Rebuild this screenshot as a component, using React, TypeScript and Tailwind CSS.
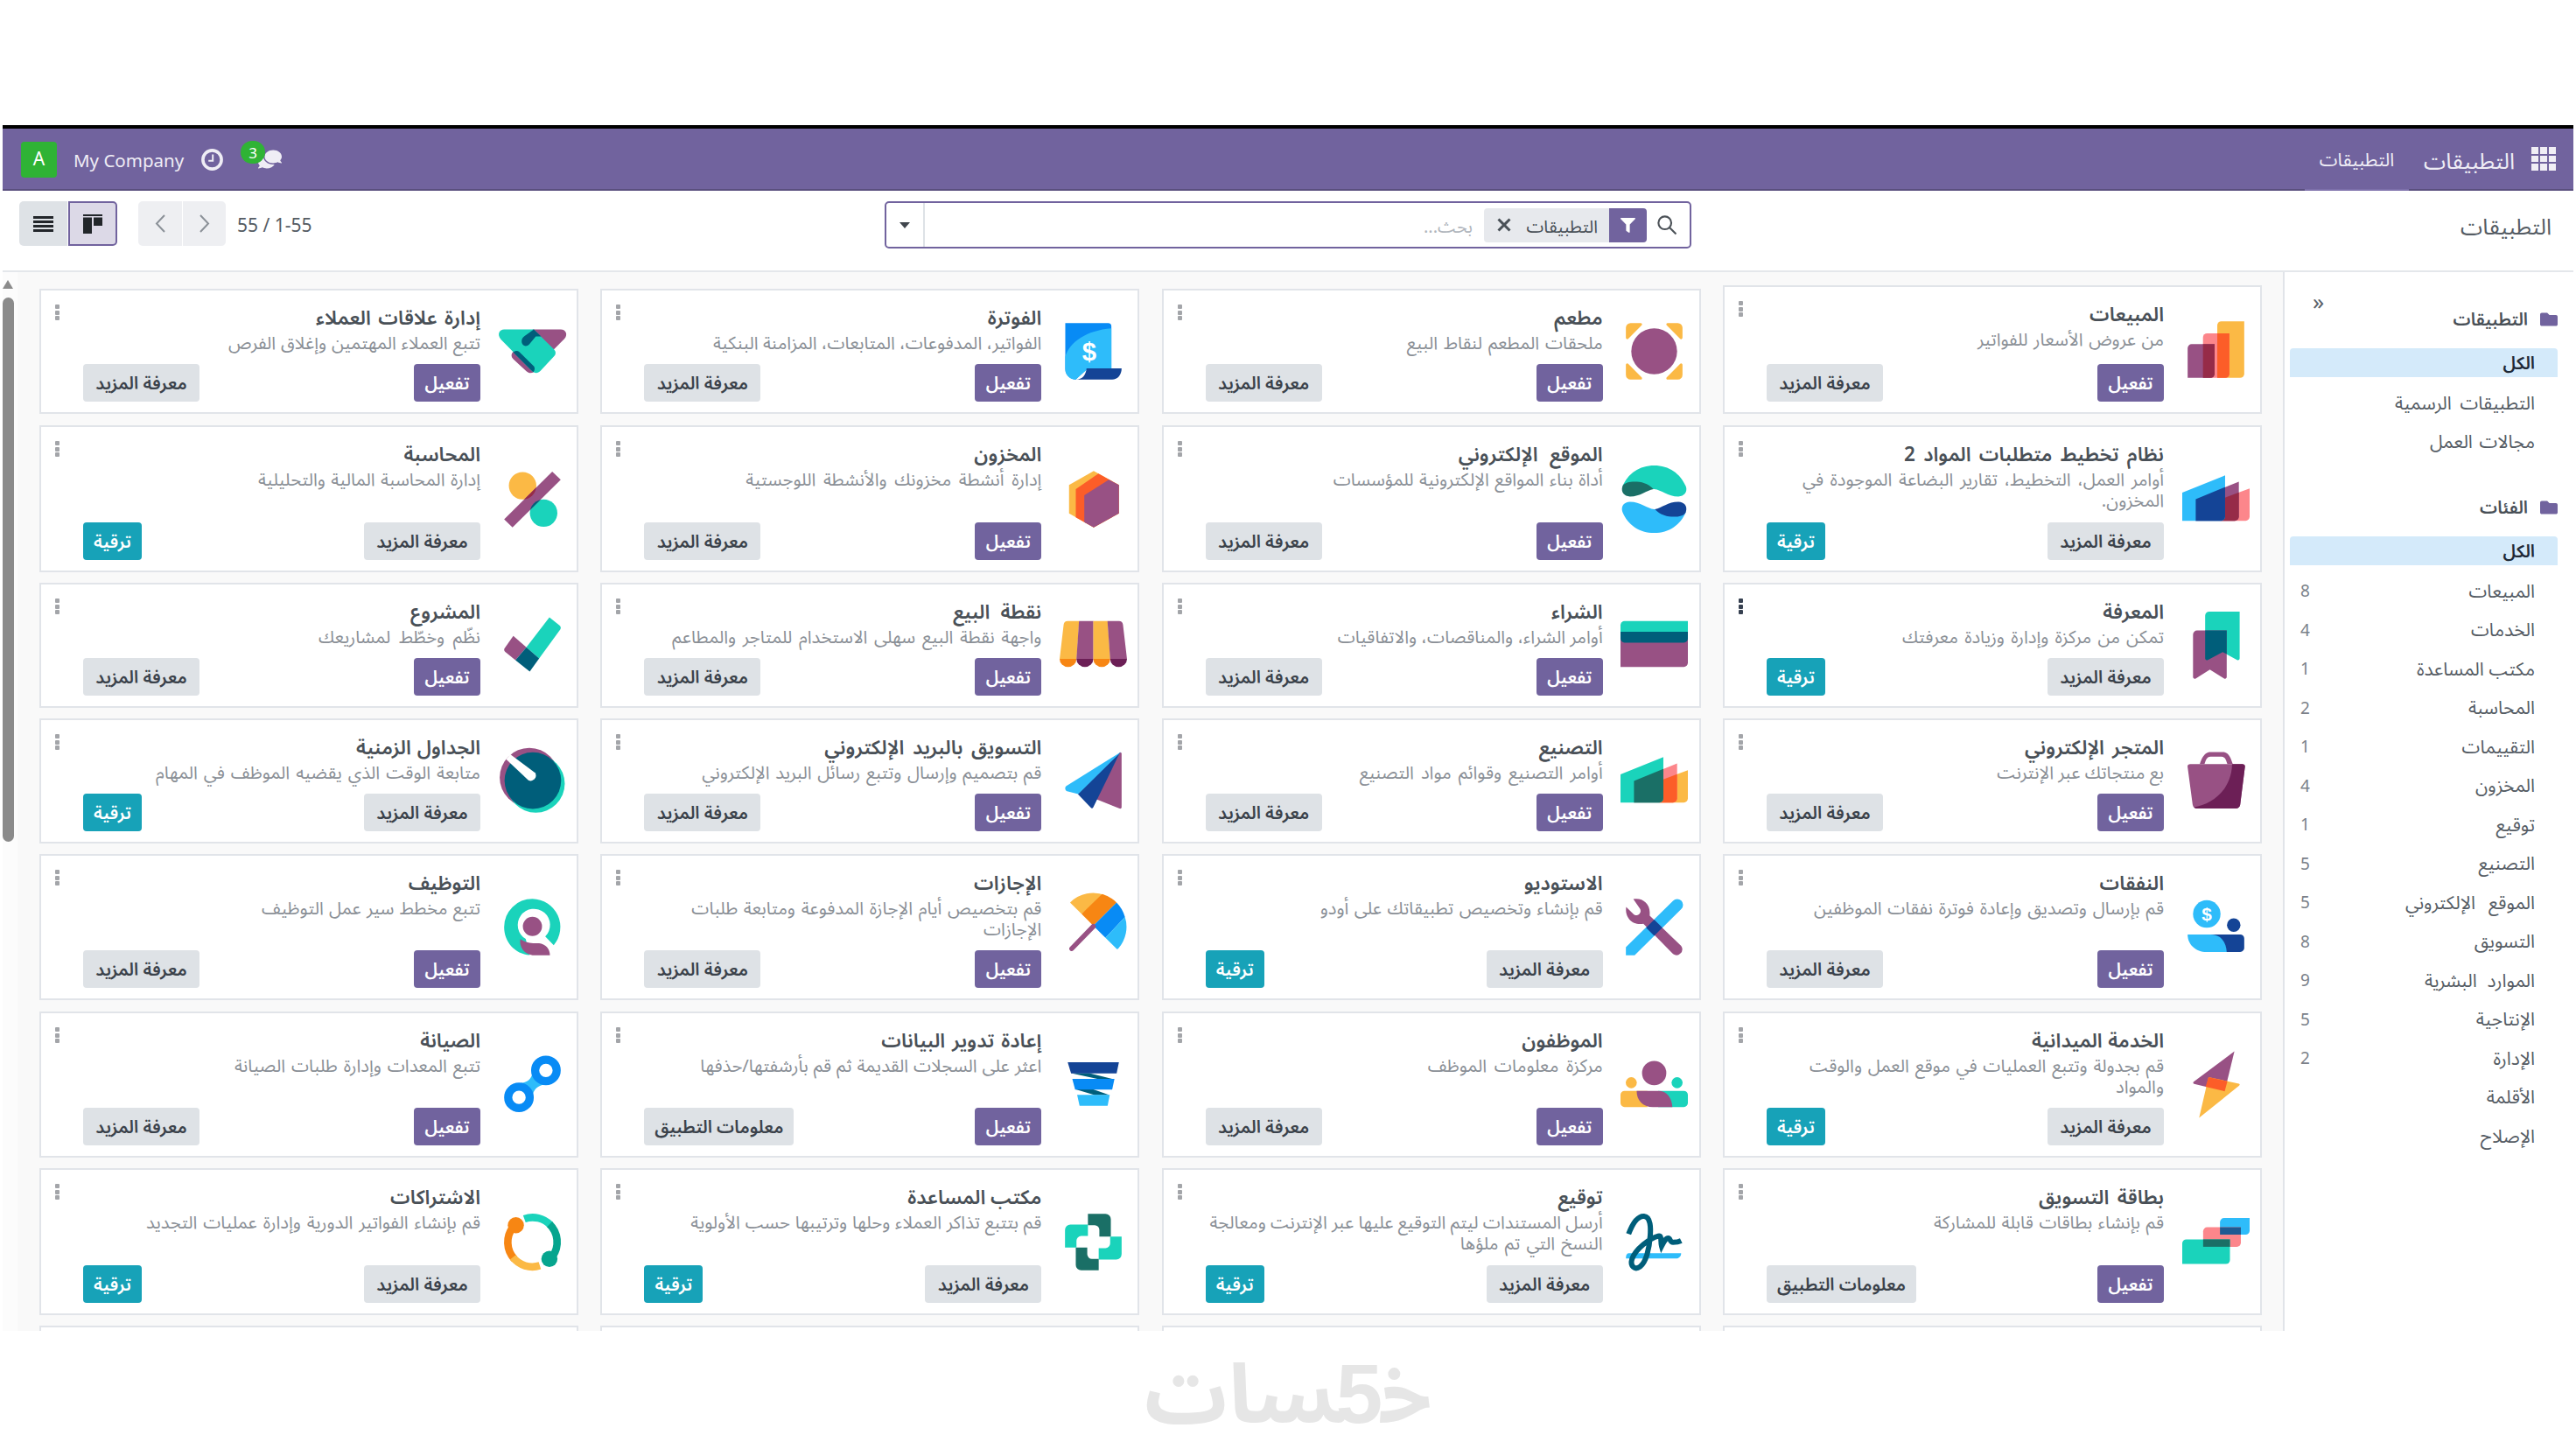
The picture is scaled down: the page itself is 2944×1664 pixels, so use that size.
import type { ReactNode } from "react";
import { FaComments, FaFilter, FaFolder } from "react-icons/fa";

const PURPLE = "#985184";
const TEAL = "#1AD3BB";
const SKY = "#2EBCFA";
const NAVY = "#144496";
const BLUE = "#088BF5";
const AMBER = "#FBB945";
const ORANGE = "#F78613";
const CORAL = "#FC868B";
const FLAME = "#FC5D28";
const WINE = "#962B48";
const PINE = "#1A6F66";
const PETROL = "#005E7A";
const PLUM = "#6C1F56";

function Buildings({ c }: { c: [string, string, string, string, string] }) {
  return (
    <>
      <path d="M31 24 50 17v21a3 3 0 0 1-3 3H29z" fill={c[4]} />
      <path d="M10 25 42 12v26a3 3 0 0 1-3 3H10z" fill={c[2]} />
      <path d="M30 24.5 42 20v18a3 3 0 0 1-3 3H29z" fill={c[3]} />
      <path d="M0 20.2 31.8 7.3V38a3 3 0 0 1-3 3H0z" fill={c[0]} />
      <path d="M10 25 31.8 16v22a3 3 0 0 1-3 3H10z" fill={c[1]} />
    </>
  );
}

const icons: Record<string, ReactNode> = {
  sales: (
    <>
      <path d="M26 7a3 3 0 0 1 3-3h17v39a3 3 0 0 1-3 3H26z" fill={AMBER} />
      <path d="M15.4 16a3 3 0 0 1 3-3H35v30a3 3 0 0 1-3 3H15.4z" fill={CORAL} />
      <path d="M26 13h9v30a3 3 0 0 1-3 3h-6z" fill={FLAME} />
      <path d="M4 24a3 3 0 0 1 3-3h17v22a3 3 0 0 1-3 3H4z" fill={PURPLE} />
      <path d="M15.4 21H24v22a3 3 0 0 1-3 3h-5.6z" fill={WINE} />
    </>
  ),
  restaurant: (
    <>
      {[0, 90, 180, 270].map((r) => (
        <path key={r} transform={`rotate(${r} 25 25)`} d="M4 7.5A3.5 3.5 0 0 1 7.5 4H15a1 1 0 0 1 .7 1.7l-10 10A1 1 0 0 1 4 15z" fill={AMBER} />
      ))}
      <circle cx="25" cy="25" r="17" fill={PURPLE} />
    </>
  ),
  invoice: (
    <>
      <path d="M4.2 4H36a2.4 2.4 0 0 1 2.4 2.4V38H20l-8 8a8 8 0 0 1-7.8-8z" fill={BLUE} />
      <path d="M38.4 8C20 9.500 7.500 18 4.200 29v9.500A7.600 7.600 0 0 0 12 46l9-8h17.400z" fill={SKY} />
      <path d="M20 37.700H46C46 42.500 43 46 39 46H12c5 0 7.500-3.500 8-8.300z" fill={NAVY} />
      <text x="22" y="32" textAnchor="middle" fontSize="19" fontWeight="700" fill="#fff" fontFamily="Liberation Sans, sans-serif">$</text>
    </>
  ),
  crm: (
    <>
      <path d="M25 8.800H46c4 0 5.400 4 2.700 7L39.500 25z" fill={PURPLE} />
      <path d="M11 25 26 40.400c-2 1.200-4 .8-5.500-.6L11 31c-2-2-2-4 0-6z" fill={PURPLE} />
      <path d="M4 8.800H26L41 23.500c1.600 1.700 1.600 3.600 0 5.300L31 39.500c-2 2-4.500 2-6.500 0L1.500 16C-1.500 12.500.5 8.800 4 8.800z" fill={TEAL} />
      <path d="M26 8.800 31.500 14 27.500 14 22.500 20c-2.500 2.300-5.500.5-5.500-2.500 0-1.500.7-2.600 2-3.700z" fill={PETROL} />
      <path d="M11 25.500c1.400-1.200 3-1.200 4.300 0L26 36c1 1.200.8 3-.3 4.400L24 39 11 26z" fill={PETROL} />
    </>
  ),
  mrp2: <Buildings c={[SKY, NAVY, PURPLE, WINE, CORAL]} />,
  mrp: <Buildings c={[TEAL, PINE, CORAL, FLAME, AMBER]} />,
  website: (
    <>
      <path d="M1.500 15.500C5.500 6 14 0 25 0s19.500 6 23.500 15.500c1.500 4.200-1.300 7.500-5.500 7.500-8 0-12.500-5-18-5.500z" fill={TEAL} />
      <path d="M24.500 17.500C20 12.500 14 11.800 9 12c-4 .2-6.800 1.500-7.500 3.500C0 19.700 2.800 23 7 23c8 0 12-4.500 17.500-5.500z" fill={PINE} />
      <g transform="rotate(180 25 25)">
        <path d="M1.500 15.500C5.500 6 14 0 25 0s19.500 6 23.500 15.500c1.500 4.200-1.300 7.500-5.500 7.500-8 0-12.500-5-18-5.500z" fill={SKY} />
        <path d="M24.500 17.500C20 12.500 14 11.800 9 12c-4 .2-6.800 1.500-7.500 3.500C0 19.700 2.800 23 7 23c8 0 12-4.500 17.500-5.500z" fill={NAVY} />
      </g>
    </>
  ),
  inventory: (
    <>
      <path d="M25.300 4 44 14.500v21L25.300 46 7 35.500v-21z" fill={AMBER} />
      <path d="M28.800 6 44 14.500v21L25.300 46 12 38.400V17.500z" fill={FLAME} />
      <path d="M36.500 10.500 44 14.500v21L25.300 46l-7-4V22z" fill={PURPLE} />
    </>
  ),
  accounting: (
    <>
      <defs>
        <clipPath id="slash"><path d="m39.700 4.500 6.300 6L10.200 46 4 40z" /></clipPath>
      </defs>
      <circle cx="17.700" cy="15" r="10.200" fill={AMBER} />
      <circle cx="33.300" cy="35.300" r="10.200" fill={TEAL} />
      <path d="m39.700 4.500 6.300 6L10.200 46 4 40z" fill={PURPLE} />
      <g clipPath="url(#slash)">
        <circle cx="17.700" cy="15" r="10.200" fill={WINE} />
        <circle cx="33.300" cy="35.300" r="10.200" fill={PETROL} />
      </g>
    </>
  ),
  knowledge: (
    <>
      <path d="M17 3a3 3 0 0 1 3-3h22.600v34.800c0 1-1 1.500-1.900 1L30 30l-11 5.800c-1 .5-2 0-2-1z" fill={TEAL} />
      <path d="M8 17a3 3 0 0 1 3-3h22v34.600c0 1-1 1.500-1.900 1L20.500 43 10 49.600c-1 .5-2 0-2-1z" fill={PURPLE} />
      <path d="M17 14h16v17.500L30 30l-11 5.800c-1 .5-2 0-2-1z" fill={PETROL} />
    </>
  ),
  purchase: (
    <>
      <path d="M0 10a3 3 0 0 1 3-3h47v13H0z" fill={TEAL} />
      <path d="M0 15h50v23a3 3 0 0 1-3 3H0z" fill={PURPLE} />
      <path d="M0 15h50v5a3 3 0 0 1-3 3H3a3 3 0 0 1-3-3z" fill={PETROL} />
    </>
  ),
  pos: (
    <>
      <path d="M6 7h8.500L12.600 35.200H0L3 9.500A3 3 0 0 1 6 7z" fill={AMBER} />
      <path d="M14.400 7H25.100V35.200H12.500z" fill={PURPLE} />
      <path d="M25 7H35.600L37.600 35.200H25z" fill={AMBER} />
      <path d="M35.500 7H44a3 3 0 0 1 3 2.500L50 35.200H37.500z" fill={PURPLE} />
      <path d="M0 35h12.500a6.250 6 0 0 1-12.500 0z" fill={ORANGE} />
      <path d="M12.500 35H25a6.250 6 0 0 1-12.500 0z" fill={PLUM} />
      <path d="M25 35h12.500a6.250 6 0 0 1-12.500 0z" fill={ORANGE} />
      <path d="M37.500 35H50a6.250 6 0 0 1-12.500 0z" fill={PLUM} />
    </>
  ),
  project: (
    <>
      <path d="m37.600 4.300 7.500 6c1 .9 1.200 2 .5 3L30 34.700 20.500 26.500z" fill={TEAL} />
      <path d="M10.800 18 20.500 26.500 12.400 36 4.800 29.800c-.9-.8-1-1.800-.4-2.700z" fill={PURPLE} />
      <path d="M20.500 26.500 30 34.700 23 44.500 12.400 36z" fill={PETROL} />
    </>
  ),
  ecommerce: (
    <>
      <path d="M13 12.500C14.500 8 16 4.500 20 3.500h11c4 1 5 4.500 6.500 9h-4C32.500 9.500 32 7 29 7h-8c-3 0-3.500 3-4.500 5.500z" fill={PURPLE} />
      <path d="M6 12.500H44.500c1.600 0 2.300 1 2 2.300L43 42.500c-.3 1.800-1.500 3-3.300 3H11c-1.800 0-3-1.200-3.300-3L4 14.800c-.3-1.300.4-2.300 2-2.300z" fill={PURPLE} />
      <path d="M37 12.500h7.500c1.600 0 2.300 1 2 2.300L43 42.500c-.3 1.800-1.500 3-3.300 3H11c-1 0-1.800-.4-2.400-1C22 42.500 36.500 32 37 12.500z" fill={PLUM} />
    </>
  ),
  email: (
    <>
      <path d="M44.500 4.200C45.400 3.700 46 4 46 5v39.500c0 .9-.8 1.200-1.500 1L27 38.500z" fill={PURPLE} />
      <path d="M45 3.500 25 44.500c-.5 1-1.300 1-2 .2l-9.500-10z" fill={NAVY} />
      <path d="M45.500 3.500 13.800 34.700 5.500 32.600C4 32 3.600 29.800 5 28.800z" fill={SKY} />
    </>
  ),
  timesheet: (
    <>
      <circle cx="22.700" cy="22.500" r="22" fill={PURPLE} />
      <circle cx="27.500" cy="27" r="21.500" fill={TEAL} />
      <circle cx="25.300" cy="24.700" r="21" fill={PETROL} />
      <path d="M5.500 9 8.500 5.200 27 19a3.900 3.900 0 0 1-5 5.500z" fill="#fff" />
    </>
  ),
  expenses: (
    <>
      <circle cx="18.200" cy="15.300" r="10.200" fill={SKY} />
      <text x="18.200" y="20" textAnchor="middle" fontSize="13.500" fontWeight="700" fill="#fff" fontFamily="Liberation Sans, sans-serif">$</text>
      <circle cx="38.200" cy="23.500" r="5" fill={NAVY} />
      <path d="M20 30.500H43a3 3 0 0 1 3 3V40a3.200 3.200 0 0 1-3 3.500H28z" fill={NAVY} />
      <path d="M4 30.500H21c8 0 11.500 6 12 13H18C10 43.500 4 38 4 30.500z" fill={SKY} />
    </>
  ),
  studio: (
    <>
      <path d="M39 5.500a4.300 4.300 0 0 1 6.200 6L10.500 46H4v-6z" fill={SKY} />
      <path d="M9.500 4.300c6-1.500 12.200 2.700 12.200 9.700v2.500L45 39a4.300 4.300 0 0 1-6 6L17 22.500C9.500 24 3 18.500 4.200 10l5.300 5.200c1.500 1.400 3.300 1.200 4.500 0s1.300-3 0-4.500z" fill={PURPLE} />
      <path d="m25 19.500 6 6-6 6-6-6z" fill={NAVY} />
    </>
  ),
  timeoff: (
    <>
      <path d="M7.750 6.750A24.400 24.400 0 0 1 34 1.500L16.300 15.300z" fill={AMBER} />
      <path d="M16.300 15.300 31.500.5A24.400 24.400 0 0 1 42.250 6.750L25 24z" fill={ORANGE} />
      <path d="M25 24 42.250 6.750A24.400 24.400 0 0 1 48.500 17.500L34 33z" fill={BLUE} />
      <path d="M34 33 48.500 17.500A24.400 24.400 0 0 1 43.700 40.800a1 1 0 0 1-1.500.2z" fill={SKY} />
      <path d="M25 24.500 9 41" stroke={PURPLE} strokeWidth="3.600" strokeLinecap="round" />
    </>
  ),
  recruitment: (
    <>
      <path d="M25 4a21 21 0 0 0-21 21c0 11 8 20 19 20.800l-3-12A12 12 0 1 1 34.500 32l6.300 6.500A21 21 0 0 0 25 4z" fill={TEAL} />
      <circle cx="25" cy="24.500" r="7.100" fill={PURPLE} />
      <path d="M16 34c2 1.500 6 3 9.500 3H30c4.500.5 8 4 8 9H25C19 45 15 40 16 34z" fill={PURPLE} />
    </>
  ),
  field: (
    <>
      <path d="M38.700.3 31.500 30 8.800 24.500c-.8-.3-.9-1-.3-1.600z" fill={PURPLE} />
      <path d="M19.500 19.500 42 24.300c.8.300.9 1 .2 1.500L12.500 49.700z" fill={AMBER} />
      <path d="M19.500 19.500 33.500 22.500 31.500 30 17.300 26.600z" fill={FLAME} />
    </>
  ),
  employees: (
    <>
      <circle cx="25" cy="16.500" r="9" fill={PURPLE} />
      <circle cx="8" cy="23.600" r="4.100" fill={AMBER} />
      <circle cx="42" cy="23.600" r="4.100" fill={TEAL} />
      <path d="M3 29.700H20v12H3a3 3 0 0 1-3-3v-6a3 3 0 0 1 3-3z" fill={AMBER} />
      <path d="M28 29.700H47a3 3 0 0 1 3 3v6a3 3 0 0 1-3 3H28z" fill={TEAL} />
      <path d="M12 29.700H28c6.500 0 10 5 10.500 12H24c-7.500 0-12-5-12-12z" fill={PURPLE} />
    </>
  ),
  recycle: (
    <>
      <path d="M8.500 16.500H22l17 4.300H28z" fill={PETROL} />
      <path d="M12 28.500H25l12 4.300H26z" fill={PETROL} />
      <path d="M6 8.500H44L42.300 16.700H8.500z" fill={NAVY} />
      <path d="M9.400 20.700H40.700L39 28.700H11.500z" fill={BLUE} />
      <path d="M13 32.700H37.200L35.600 40.700H14.800z" fill={SKY} />
    </>
  ),
  maintenance: (
    <>
      <path d="M25 16C24.500 21 21 23.500 16 23.800L25 34c.5-5 4-8.500 9-9z" fill={SKY} />
      <circle cx="35" cy="14.500" r="8" fill="none" stroke={BLUE} strokeWidth="6" />
      <circle cx="15" cy="34.500" r="8" fill="none" stroke={BLUE} strokeWidth="6" />
    </>
  ),
  card: (
    <>
      <path d="M28 10.200a3 3 0 0 1 3-3H50v9.300a3 3 0 0 1-3 3H28z" fill={SKY} />
      <path d="M15.500 17a3 3 0 0 1 3-3H43.500V25.500a3 3 0 0 1-3 3h-25z" fill={CORAL} />
      <path d="M28 14H43.500v5.500H28z" fill="#1F5A92" />
      <path d="M0 26a3 3 0 0 1 3-3H35.400V38.300a3 3 0 0 1-3 3H0z" fill={TEAL} />
      <path d="M15.500 23H35.400v5.500H15.500z" fill={PINE} />
    </>
  ),
  sign: (
    <>
      <path d="M6 33.200H45c0 2.200-1.500 4-4 4H4c0-2 .5-4 2-4z" fill={SKY} />
      <path d="M6 19C9 11 13 5.500 17.500 5.800c5 .4 5 9 4.500 15-.6 9-3 19-7.500 22.400-4 3-7.500-.7-6-5.500C11 30 22 22 28 20.500c3-.7 1.500 4 2.500 7.500C32 25 33.500 22 35.500 22c1.500 0 1 3.200 3.500 3.200 2 0 4-.2 6-1.200" fill="none" stroke={PETROL} strokeWidth="3.900" />
    </>
  ),
  helpdesk: (
    <>
      {[0, 90, 180, 270].map((r) => (
        <path key={r} transform={`rotate(${r} 25 25)`} d="M21 4H34a4 4 0 0 1 4 4V21H29.500V16a3.500 3.500 0 0 0-3.500-3.500H21z" fill={r % 180 ? TEAL : PINE} />
      ))}
    </>
  ),
  subscription: (
    <g fill="none" strokeWidth="5.600">
      <path d="M19 7.800A18.300 18.300 0 0 1 38.500 12.500" stroke={TEAL} />
      <path d="M37.700 11.800A18.300 18.300 0 0 1 40 35.500" stroke="#06A58E" />
      <path d="M10.500 14A18.300 18.300 0 0 0 11.500 37.500" stroke={ORANGE} />
      <path d="M10.500 36.300A18.300 18.300 0 0 0 30.500 42.500" stroke={AMBER} />
      <circle cx="12.700" cy="12.500" r="6" fill={ORANGE} stroke="none" />
      <circle cx="37.600" cy="37.500" r="6" fill="#06A58E" stroke="none" />
    </g>
  ),
};

/* A text and the width its words are spread over. */
type Line = [string, number];
type App = { i: string; t: Line; d: Line[]; b: "a" | "u" | "i"; dark?: boolean };

const rows: { wrap: string; card: string; apps: App[] }[] = [
  {
    wrap: "h-[160px]",
    card: "h-[143px]",
    apps: [
      { i: "sales", t: ["المبيعات", 84], d: [["من عروض الأسعار للفواتير", 213]], b: "a" },
      { i: "restaurant", t: ["مطعم", 60], d: [["ملحقات المطعم لنقاط البيع", 224]], b: "a" },
      { i: "invoice", t: ["الفوترة", 64], d: [["الفواتير، المدفوعات، المتابعات، المزامنة البنكية", 374]], b: "a" },
      { i: "crm", t: ["إدارة علاقات العملاء", 188], d: [["تتبع العملاء المهتمين وإغلاق الفرص", 288]], b: "a" },
    ],
  },
  {
    wrap: "h-[180px]",
    card: "h-[168px]",
    apps: [
      { i: "mrp2", t: ["نظام تخطيط متطلبات المواد 2", 297], d: [["أوامر العمل، التخطيط، تقارير البضاعة الموجودة في", 413], ["المخزون.", 68]], b: "u" },
      { i: "website", t: ["الموقع الإلكتروني", 165], d: [["أداة بناء المواقع الإلكترونية للمؤسسات", 308]], b: "a" },
      { i: "inventory", t: ["المخزون", 76], d: [["إدارة أنشطة مخزونك والأنشطة اللوجستية", 338]], b: "a" },
      { i: "accounting", t: ["المحاسبة", 86], d: [["إدارة المحاسبة المالية والتحليلية", 254]], b: "u" },
    ],
  },
  {
    wrap: "h-[155px]",
    card: "h-[143px]",
    apps: [
      { i: "knowledge", t: ["المعرفة", 72], d: [["تمكن من مركزة وإدارة وزيادة معرفتك", 299]], b: "u", dark: true },
      { i: "purchase", t: ["الشراء", 54], d: [["أوامر الشراء، والمناقصات، والاتفاقيات", 299]], b: "a" },
      { i: "pos", t: ["نقطة البيع", 101], d: [["واجهة نقطة البيع سهلى الاستخدام للمتاجر والمطاعم", 422]], b: "a" },
      { i: "project", t: ["المشروع", 79], d: [["نظّم وخطّط لمشاريعك", 185]], b: "a" },
    ],
  },
  {
    wrap: "h-[155px]",
    card: "h-[143px]",
    apps: [
      { i: "ecommerce", t: ["المتجر الإلكتروني", 159], d: [["بع منتجاتك عبر الإنترنت", 187]], b: "a" },
      { i: "mrp", t: ["التصنيع", 74], d: [["أوامر التصنيع وقوائم مواد التصنيع", 278]], b: "a" },
      { i: "email", t: ["التسويق بالبريد الإلكتروني", 248], d: [["قم بتصميم وإرسال وتتبع رسائل البريد الإلكتروني", 388]], b: "a" },
      { i: "timesheet", t: ["الجداول الزمنية", 142], d: [["متابعة الوقت الذي يقضيه الموظف في المهام", 371]], b: "u" },
    ],
  },
  {
    wrap: "h-[180px]",
    card: "h-[167px]",
    apps: [
      { i: "expenses", t: ["النفقات", 72], d: [["قم بإرسال وتصديق وإعادة فوترة نفقات الموظفين", 400]], b: "a" },
      { i: "studio", t: ["الاستوديو", 90], d: [["قم بإنشاء وتخصيص تطبيقاتك على أودو", 323]], b: "u" },
      { i: "timeoff", t: ["الإجازات", 73], d: [["قم بتخصيص أيام الإجازة المدفوعة ومتابعة طلبات", 400], ["الإجازات", 61]], b: "a" },
      { i: "recruitment", t: ["التوظيف", 84], d: [["تتبع مخطط سير عمل التوظيف", 250]], b: "a" },
    ],
  },
  {
    wrap: "h-[179px]",
    card: "h-[167px]",
    apps: [
      { i: "field", t: ["الخدمة الميدانية", 151], d: [["قم بجدولة وتتبع العمليات في موقع العمل والوقت", 405], ["والمواد", 57]], b: "u" },
      { i: "employees", t: ["الموظفون", 97], d: [["مركزة معلومات الموظف", 200]], b: "a" },
      { i: "recycle", t: ["إعادة تدوير البيانات", 183], d: [["اعثر على السجلات القديمة ثم قم بأرشفتها/حذفها", 390]], b: "i" },
      { i: "maintenance", t: ["الصيانة", 70], d: [["تتبع المعدات وإدارة طلبات الصيانة", 281]], b: "a" },
    ],
  },
  {
    wrap: "h-[180px]",
    card: "h-[168px]",
    apps: [
      { i: "card", t: ["بطاقة التسويق", 143], d: [["قم بإنشاء بطاقات قابلة للمشاركة", 263]], b: "i" },
      { i: "sign", t: ["توقيع", 52], d: [["أرسل المستندات ليتم التوقيع عليها عبر الإنترنت ومعالجة", 448], ["النسخ التي تم ملؤها", 163]], b: "u" },
      { i: "helpdesk", t: ["مكتب المساعدة", 151], d: [["قم بتتبع تذاكر العملاء وحلها وترتيبها حسب الأولوية", 401]], b: "u" },
      { i: "subscription", t: ["الاشتراكات", 99], d: [["قم بإنشاء الفواتير الدورية وإدارة عمليات التجديد", 382]], b: "u" },
    ],
  },
];

function Spread({ line }: { line: Line }) {
  return (
    <div className="whitespace-nowrap text-justify [text-align-last:justify]" style={{ width: line[1] }}>
      {line[0]}
    </div>
  );
}

const btn = "flex h-[43px] items-center justify-center whitespace-nowrap rounded-[4px] pt-px text-[20px] font-semibold leading-none";

function Buttons({ kind }: { kind: App["b"] }) {
  if (kind === "u")
    return (
      <>
        <div className={`${btn} w-[133px] bg-[#dee2e6] text-[#3b424b]`}>معرفة المزيد</div>
        <div className={`${btn} w-[67px] bg-[#17a2b8] text-white`}>ترقية</div>
      </>
    );
  return (
    <>
      <div className={`${btn} w-[76px] bg-[#71639e] text-white`}>تفعيل</div>
      <div className={`${btn} ${kind === "i" ? "w-[171px]" : "w-[133px]"} bg-[#dee2e6] text-[#3b424b]`}>
        {kind === "i" ? "معلومات التطبيق" : "معرفة المزيد"}
      </div>
    </>
  );
}

function Card({ app, height }: { app: App; height: string }) {
  return (
    <div className={`relative flex w-[616px] border-2 border-[#e1e4e9] bg-white ${height}`}>
      <div className="flex w-[110px] shrink-0 items-center justify-center pl-[8px]">
        <svg viewBox="0 0 50 50" className="h-[77px] w-[77px] overflow-visible">{icons[app.i]}</svg>
      </div>
      <div className="flex min-w-0 flex-1 flex-col pl-[48px] pt-[15px]">
        <div className="text-[22.500px] font-semibold leading-[32px] text-[#495057]">
          <Spread line={app.t} />
        </div>
        <div className="text-[20.300px] leading-[24px] text-[#8a8f96]">
          {app.d.map((l) => (
            <Spread key={l[0]} line={l} />
          ))}
        </div>
        <div className="mt-auto flex justify-between pb-[12px]">
          <Buttons kind={app.b} />
        </div>
      </div>
      <div className={`absolute left-[16px] top-[16px] flex flex-col gap-[1.500px] ${app.dark ? "text-[#374151]" : "text-[#a3a5a9]"}`}>
        <i className="h-[5px] w-[5px] rounded-[1px] bg-current" />
        <i className="h-[5px] w-[5px] rounded-[1px] bg-current" />
        <i className="h-[5px] w-[5px] rounded-[1px] bg-current" />
      </div>
    </div>
  );
}

const cats: [string, string, number][] = [
  ["المبيعات", "8", 74],
  ["الخدمات", "4", 71],
  ["مكتب المساعدة", "1", 135],
  ["المحاسبة", "2", 76],
  ["التقييمات", "1", 79],
  ["المخزون", "4", 67],
  ["توقيع", "1", 47],
  ["التصنيع", "5", 66],
  ["الموقع الإلكتروني", "5", 148],
  ["التسويق", "8", 71],
  ["الموارد البشرية", "9", 126],
  ["الإنتاجية", "5", 66],
  ["الإدارة", "2", 50],
  ["الأقلمة", "", 57],
  ["الإصلاح", "", 63],
];

function SideHead({ children }: { children: ReactNode }) {
  return (
    <div className="flex h-[36px] items-center gap-[14px] pr-[18px] text-[20px] font-semibold text-[#495057]">
      <FaFolder className="h-[20px] w-[20px] text-[#71639e]" />
      {children}
    </div>
  );
}

function SideAll() {
  return (
    <div className="mx-[6px] mr-[18px] flex h-[33px] items-center rounded-t-[4px] bg-[#d4eafa] pr-[26px] text-[20px] font-semibold text-[#1f2937]">الكل</div>
  );
}

function SideItem({ label, width, count }: { label: string; width: number; count?: string }) {
  return (
    <div className="flex h-[44.500px] items-center justify-between pl-[18px] pr-[44px] text-[21px] text-[#555c64]">
      <Spread line={[label, width]} />
      <span className="text-[19px] text-[#7b8189]">{count}</span>
    </div>
  );
}

export default function App() {
  return (
    <div dir="rtl" className="h-[1664px] w-[2944px] overflow-hidden bg-white font-['Noto_Sans','Noto_Sans_Arabic','DejaVu_Sans',sans-serif]">
      <div className="h-[143px]" />
      <div className="mx-[3px] flex h-[1378px] flex-col overflow-hidden">
        <div className="h-[4px] shrink-0 bg-black" />
        <header className="flex h-[71px] shrink-0 items-stretch justify-between bg-[#71639e] text-[#efedf5]">
          <div className="flex items-center border-b-2 border-[#5a4f7e] pr-[20px]">
            <div className="grid grid-cols-3 gap-[2px]">
              {Array.from({ length: 9 }, (_, k) => (
                <i key={k} className="h-[7.500px] w-[8px] bg-[#f0eef5]" />
              ))}
            </div>
            <div className="mr-[19px] w-[105px] whitespace-nowrap pt-[4px] text-[25.500px]">التطبيقات</div>
            <div className="w-[16px]" />
          </div>
          <div className="flex w-[119px] items-center justify-center whitespace-nowrap border-b-2 border-[#7d70ab] pt-[2px] text-[21px]">التطبيقات</div>
          <div dir="ltr" className="flex flex-1 items-center border-b-2 border-[#5a4f7e] pl-[21px]">
            <div className="mt-px flex h-[41px] w-[41px] items-center justify-center rounded-[4px] bg-[#2fb335] text-[21px] text-white">A</div>
            <div className="ml-[19px] mt-[3px] w-[127px] whitespace-nowrap text-[20.500px]">My Company</div>
            <svg viewBox="0 0 25 25" className="ml-[19px] mt-px h-[25px] w-[25px]" fill="none" stroke="currentColor">
              <circle cx="12.500" cy="12.500" r="10.600" strokeWidth="3.600" />
              <path d="M13.200 6.500v7.300H8.200" strokeWidth="2" />
            </svg>
            <div className="relative ml-[40px] mt-px h-[24px] w-[27px]">
              <FaComments className="h-[24px] w-[27px] -scale-x-100" />
              <div className="absolute -left-[20px] -top-[9px] flex h-[26px] w-[28px] items-center justify-center rounded-full bg-[#2fb335] text-[17px] leading-none text-white">3</div>
            </div>
          </div>
        </header>
        <div className="flex h-[93px] shrink-0 border-b-2 border-[#e4e7eb] pt-[12px]">
          <div className="mr-[25px] w-[983px] pt-[8px] text-[25.500px] leading-[40px] text-[#555c64]">التطبيقات</div>
          <div className="flex h-[54px] w-[922px] items-center rounded-[5px] border-2 border-[#71639e]">
            <svg viewBox="0 0 24 24" className="mr-[15px] h-[24px] w-[22px]" fill="none" stroke="#4b5157" strokeWidth="2.300">
              <circle cx="9.500" cy="9.500" r="8" />
              <path d="m15.500 15.500 8 8" />
            </svg>
            <div className="mr-[12px] flex h-[39px] w-[43px] items-center justify-center rounded-r-[4px] bg-[#71639e]">
              <FaFilter className="h-[17px] w-[17px] text-white" />
            </div>
            <div className="flex h-[39px] w-[143px] items-center justify-between rounded-l-[4px] bg-[#e7e9ed] pl-[15px] pr-[13px] text-[20px] text-[#495057]">
              <span className="whitespace-nowrap pt-[3px]">التطبيقات</span>
              <svg viewBox="0 0 16 16" className="h-[16px] w-[16px]" stroke="#495057" strokeWidth="3"><path d="m1.500 1.500 13 13m0-13-13 13" /></svg>
            </div>
            <div className="mr-[13px] flex-1 pt-[3px] text-[20px] text-[#b0b5bc]">بحث...</div>
            <div className="flex h-full w-[44px] items-center justify-center border-r-2 border-[#dee2e6]">
              <i className="border-x-[6.500px] border-t-[7px] border-x-transparent border-t-[#40464d]" />
            </div>
          </div>
          <div dir="ltr" className="mr-[132px] flex h-[51px] w-[876px] pl-[19px]">
            <div className="flex w-[55px] items-center justify-center rounded-l-[5px] bg-[#dee2e6]">
              <div className="flex w-[23px] flex-col gap-[2px]">
                {[0, 1, 2, 3].map((k) => (
                  <i key={k} className="h-[3px] w-full bg-[#22262a]" />
                ))}
              </div>
            </div>
            <div className="ml-px flex w-[56px] items-center justify-center rounded-r-[5px] border-2 border-[#71639e] bg-[#dcd9e7]">
              <svg viewBox="0 0 22 22" className="h-[22px] w-[22px]" fill="#22262a">
                <path d="M0 0h22v2H0zM0 3.500h10V22H0zM12 3.500h10V13H12z" />
              </svg>
            </div>
            <div className="ml-[24px] flex w-[50px] items-center justify-center rounded-l-[5px] bg-[#eeeff2]">
              <svg viewBox="0 0 12 21" className="h-[21px] w-[12px]" fill="none" stroke="#8a9097" strokeWidth="2"><path d="M11 1 2 10.500l9 9.500" /></svg>
            </div>
            <div className="ml-px flex w-[49px] items-center justify-center rounded-r-[5px] bg-[#eeeff2]">
              <svg viewBox="0 0 12 21" className="h-[21px] w-[12px]" fill="none" stroke="#8a9097" strokeWidth="2"><path d="m1 1 9 9.500L1 20" /></svg>
            </div>
            <div className="ml-[13px] flex items-center pt-[5px] text-[21px] text-[#555c64]">55 / 1-55</div>
          </div>
        </div>
        <div className="flex min-h-0 flex-1">
          <aside className="relative w-[332px] shrink-0 border-l-2 border-[#e1e4e9] bg-white pt-[36px]">
            <div dir="ltr" className="absolute left-[32px] top-[18px] text-[26px] leading-[30px] text-[#5a6169]">»</div>
            <SideHead>التطبيقات</SideHead>
            <div className="h-[15px]" />
            <SideAll />
            <div className="h-[7px]" />
            <SideItem label="التطبيقات الرسمية" width={160} />
            <SideItem label="مجالات العمل" width={120} />
            <div className="h-[35px]" />
            <SideHead>الفئات</SideHead>
            <div className="h-[15px]" />
            <SideAll />
            <div className="h-[7px]" />
            {cats.map(([l, c, w]) => (
              <SideItem key={l} label={l} width={w} count={c} />
            ))}
          </aside>
          <main className="flex-1 overflow-hidden bg-[#f9f9f9] pl-[25px] pr-[24px] pt-[15px]">
            {rows.map((r, ri) => (
              <div key={ri} className={`flex justify-between ${r.wrap}`}>
                {r.apps.map((a, k) => (
                  <div key={a.i} className={ri === 0 && k > 0 ? "pt-[4px]" : ""}>
                    <Card app={a} height={ri === 0 && k === 0 ? "h-[147px]" : r.card} />
                  </div>
                ))}
              </div>
            ))}
            <div className="flex justify-between">
              {[0, 1, 2, 3].map((k) => (
                <div key={k} className="h-[140px] w-[616px] border-2 border-[#e1e4e9] bg-white" />
              ))}
            </div>
          </main>
          <div className="flex w-[17px] flex-col bg-[#fcfcfc] pt-[9px]">
            <i className="mr-auto border-x-[6px] border-b-[10px] border-x-transparent border-b-[#8b8b8b]" />
            <div className="mr-auto mt-[10px] h-[622px] w-[13px] rounded-full bg-[#8b8b8b]" />
          </div>
        </div>
      </div>
      <div className="flex h-[143px] items-center justify-center text-[94px] font-bold text-[#e6e6e6]">
        <div className="flex items-baseline">
          <span>{"خ\u200d"}</span>
          <span className="-mx-[3px] font-['Liberation_Sans',sans-serif] text-[96px]">5</span>
          <span>{"\u200dسات"}</span>
        </div>
      </div>
    </div>
  );
}
